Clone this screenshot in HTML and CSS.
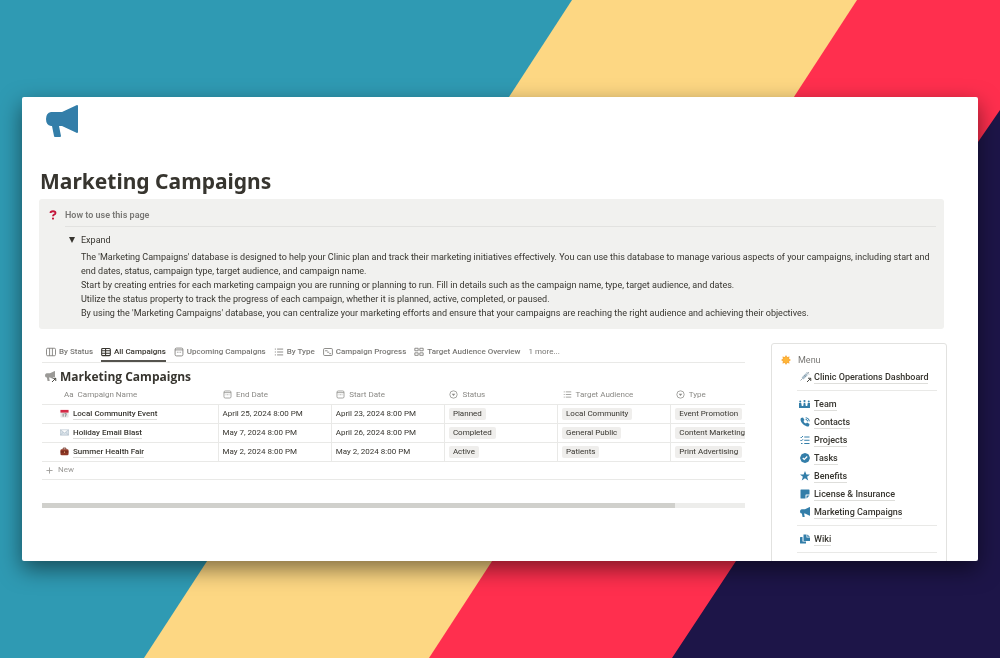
FILE: index.html
```html
<!DOCTYPE html>
<html lang="en">
<head>
<meta charset="utf-8">
<title>Marketing Campaigns</title>
<meta name="viewport" content="width=device-width, initial-scale=1">
<link rel="stylesheet" href="styles.css">
</head>
<body>
<svg class="backdrop" viewBox="0 0 1000 658" preserveAspectRatio="none" aria-hidden="true">
  <rect width="1000" height="658" fill="#2f9ab3"/>
  <path fill="#fdd783" d="M572 0H1000V658H144z"/>
  <path fill="#ff2f4e" d="M857 0H1000V658H429z"/>
  <path fill="#1d1548" d="M1000 110V658H643L672 658 736 561 978 142z"/>
</svg>
<svg class="sprite" aria-hidden="true">
  <symbol id="horn" viewBox="0 0 32 32"><path d="M5 7h11L31 0q1 0 1 1v26q0 1-1 1L16 21h-3l2 10q0 1-1 1H9q-1 0-1-1L6 21H5q-5-1-5-7t5-7z"/></symbol>
  <symbol id="board" viewBox="0 0 12 12"><path class="line" d="M2 1.500h8q1.400 0 1.400 1.400v6.200q0 1.400-1.400 1.400H2Q.6 10.500.6 9.100V2.900Q.6 1.500 2 1.500zM4.300 1.500v9M7.700 1.500v9"/></symbol>
  <symbol id="grid" viewBox="0 0 12 12"><path class="line bold" d="M2 1.700h8q1.200 0 1.200 1.200v6.200q0 1.200-1.200 1.200H2Q.8 10.300.8 9.100V2.900Q.8 1.700 2 1.700zM.8 4.500h10.400M.8 7.400h10.400M5.500 1.700v8.600"/></symbol>
  <symbol id="cal" viewBox="0 0 12 12"><path class="line" d="M3 1.300h6q1.700 0 1.700 1.700v6q0 1.700-1.700 1.700H3Q1.300 10.700 1.300 9V3Q1.300 1.300 3 1.300zM1.300 3.500h9.400M3.500 6.300h1M5.500 6.300h1M7.500 6.300h1"/></symbol>
  <symbol id="list" viewBox="0 0 12 12"><path class="line" d="M1 2.500h1.300M1 6h1.300M1 9.500h1.300M3.700 2.500H11M3.700 6H11M3.700 9.500H11"/></symbol>
  <symbol id="progress" viewBox="0 0 12 12"><path class="line" d="M2 1.800h8q1.300 0 1.300 1.300v5.800q0 1.300-1.300 1.300H2Q.7 10.200.7 8.900V3.100Q.7 1.800 2 1.800zM2.500 4.500h3M5 6.200h2.500M7.500 8h2.200"/></symbol>
  <symbol id="gallery" viewBox="0 0 12 12"><path class="line" d="M1 1.500h4v3H1zM7 1.500h4v3H7zM1 7h4v3H1zM7 7h4v3H7z"/></symbol>
  <symbol id="select" viewBox="0 0 12 12"><circle class="line" cx="6" cy="6" r="4.900"/><path d="M3.600 5h4.800L6 8z"/></symbol>
  <symbol id="arrow" viewBox="0 0 12 12"><path class="line halo" d="M2 10 9 3M4 2.500h5.500V8"/><path class="line heavy" d="M2 10 9 3M4 2.500h5.500V8"/></symbol>
  <symbol id="team" viewBox="0 0 24 20"><circle cx="3.500" cy="5" r="2"/><circle cx="12" cy="4" r="2.200"/><circle cx="20.500" cy="5" r="2"/><path d="M1 8h4.500l1 6h3l1-6.500h3l1 6.500h3l1-6H23v10H1z"/></symbol>
  <symbol id="phone" viewBox="0 0 20 20"><path d="M2 2 6 1l3 5-2 2q1 4 5 5l2-2 5 3-1 4q-2 2-6 0Q3 14 1 6 1 3 2 2z"/><path class="line phone" d="M11 4.500q4 .5 4.500 4.500M11.500 1.200q7 1 7.300 7.300"/></symbol>
  <symbol id="checks" viewBox="0 0 20 20"><path class="line phone" d="m1 4 1.500 1.500L6 2M1 10.500 2.500 12 6 8.500M8.500 4H19M8.500 10.500H19M8.500 17H19M2 17h3"/></symbol>
  <symbol id="done" viewBox="0 0 20 20"><path d="m10 0 3 1 3.700 1.500L18.500 6l1.500 4-1.500 4-1.800 3.500L13 19l-3 1-3-1-3.700-1.500L1.500 14 0 10l1.500-4 1.800-3.500L7 1z"/><path class="tick" d="m5.500 10 3 3 6-6"/></symbol>
  <symbol id="star" viewBox="0 0 20 20"><path d="m10 0 2.800 7H20l-5.800 4.500L16.500 19 10 14.500 3.500 19l2.300-7.500L0 7h7.200z"/></symbol>
  <symbol id="note" viewBox="0 0 20 20"><path d="M2 1h16q1 0 1 1v9h-7q-1 0-1 1v7H2q-1 0-1-1V2q0-1 1-1zM13 13h6l-6 6z"/></symbol>
  <symbol id="pages" viewBox="0 0 20 20"><path d="M1 6h4v9h7v4H1q-1 0-1-1V7zM7 1h6v6h7v7H8q-1 0-1-1zM14.500 1 20 5.500h-5.500z"/></symbol>
</svg>
<main class="window">
  <svg class="page-icon"><use href="#horn"/></svg>
  <h1 class="title">Marketing Campaigns</h1>
  <section class="callout">
    <svg class="question" viewBox="0 0 10 12" aria-hidden="true"><path class="hook" d="M2 3.500Q2 1.500 5 1.500t3 2Q8 5 6.300 5.600 5 6.200 5 7.500"/><circle cx="5" cy="10.300" r="1.300"/></svg>
    <div class="callout-body">
      <h2 class="callout-title">How to use this page</h2>
      <details class="toggle" open>
        <summary>Expand</summary>
        <div class="toggle-text">
          <p>The 'Marketing Campaigns' database is designed to help your Clinic plan and track their marketing initiatives effectively. You can use this database to manage various aspects of your campaigns, including start and end dates, status, campaign type, target audience, and campaign name.</p>
          <p>Start by creating entries for each marketing campaign you are running or planning to run. Fill in details such as the campaign name, type, target audience, and dates.</p>
          <p>Utilize the status property to track the progress of each campaign, whether it is planned, active, completed, or paused.</p>
          <p>By using the 'Marketing Campaigns' database, you can centralize your marketing efforts and ensure that your campaigns are reaching the right audience and achieving their objectives.</p>
        </div>
      </details>
    </div>
  </section>
  <div class="columns">
    <section class="database">
      <nav class="tabs" aria-label="Views">
        <button class="tab"><svg><use href="#board"/></svg>By Status</button>
        <button class="tab active" aria-current="true"><svg><use href="#grid"/></svg>All Campaigns</button>
        <button class="tab"><svg><use href="#cal"/></svg>Upcoming Campaigns</button>
        <button class="tab"><svg><use href="#list"/></svg>By Type</button>
        <button class="tab"><svg><use href="#progress"/></svg>Campaign Progress</button>
        <button class="tab"><svg><use href="#gallery"/></svg>Target Audience Overview</button>
        <button class="tab more">1 more...</button>
      </nav>
      <h2 class="db-title"><span class="linked gray"><svg class="base"><use href="#horn"/></svg><svg class="badge"><use href="#arrow"/></svg></span>Marketing Campaigns</h2>
      <div class="table-scroll">
        <table class="table">
          <colgroup><col class="name-col"><col><col><col><col><col></colgroup>
          <thead><tr>
            <th scope="col"><span class="head"><span class="aa">Aa</span>Campaign Name</span></th>
            <th scope="col"><span class="head"><svg><use href="#cal"/></svg>End Date</span></th>
            <th scope="col"><span class="head"><svg><use href="#cal"/></svg>Start Date</span></th>
            <th scope="col"><span class="head"><svg><use href="#select"/></svg>Status</span></th>
            <th scope="col"><span class="head"><svg><use href="#list"/></svg>Target Audience</span></th>
            <th scope="col"><span class="head"><svg><use href="#select"/></svg>Type</span></th>
          </tr></thead>
          <tbody>
            <tr><td><span class="name"><svg viewBox="0 0 10 10"><rect x=".5" y="1" width="9" height="8.500" rx="1" fill="#e8e5e5"/><path fill="#d42945" d="M.5 1h9v3h-9z"/><path fill="none" stroke="#777" stroke-width=".9" d="M3.500 5v3.500M5 5.200h2L6 8.500"/></svg><a href="#">Local Community Event</a></span></td><td>April 25, 2024 8:00 PM</td><td>April 23, 2024 8:00 PM</td><td><span class="tag">Planned</span></td><td><span class="tag">Local Community</span></td><td><span class="tag">Event Promotion</span></td></tr>
            <tr><td><span class="name"><svg viewBox="0 0 10 10"><path fill="#d9e2e9" stroke="#a6b7c4" stroke-width=".6" d="M.5 2h9v6h-9zl4.500 3.500L9.500 2M.5 8l3.200-3.500M9.500 8 6.300 4.500"/></svg><a href="#">Holiday Email Blast</a></span></td><td>May 7, 2024 8:00 PM</td><td>April 26, 2024 8:00 PM</td><td><span class="tag">Completed</span></td><td><span class="tag">General Public</span></td><td><span class="tag">Content Marketing</span></td></tr>
            <tr><td><span class="name"><svg viewBox="0 0 10 10"><path fill="none" stroke="#6b2a1c" d="M3.500 3V1.200h3V3"/><rect x=".5" y="2.500" width="9" height="6.700" rx="1.500" fill="#8f3826"/><path stroke="#5e2014" stroke-width=".8" d="M.5 5.500h9"/><path fill="#e0a070" d="M4.400 5h1.200v1.500H4.400z"/></svg><a href="#">Summer Health Fair</a></span></td><td>May 2, 2024 8:00 PM</td><td>May 2, 2024 8:00 PM</td><td><span class="tag">Active</span></td><td><span class="tag">Patients</span></td><td><span class="tag">Print Advertising</span></td></tr>
          </tbody>
        </table>
      </div>
      <button class="new-row"><svg viewBox="0 0 8 8"><path class="line" d="M4 .5v7M.5 4h7"/></svg>New</button>
      <div class="scrollbar"><div class="thumb"></div></div>
    </section>
    <aside class="menu">
      <svg class="sun" viewBox="0 0 20 20" aria-hidden="true"><path fill="#f7a93b" d="m10 0 2.400 3.800L17 3l-.8 4.600L20 10l-3.800 2.400L17 17l-4.600-.8L10 20l-2.400-3.800L3 17l.8-4.600L0 10l3.800-2.400L3 3l4.600.8z"/><circle cx="10" cy="10" r="5.500" fill="#ffb638"/></svg>
      <div class="menu-body">
        <h2 class="menu-title">Menu</h2>
        <a class="link" href="#"><span class="linked"><svg class="base" viewBox="0 0 20 20"><path stroke="#a9bdca" stroke-width="5" d="m5 15 9-9"/><path fill="none" stroke="#82939f" stroke-width="1.500" d="m1 19 4-4M13 2l5 5M15 5l3-3M8 8l4 4"/></svg><svg class="badge"><use href="#arrow"/></svg></span><span>Clinic Operations Dashboard</span></a>
        <nav class="group" aria-label="Databases">
          <a class="link" href="#"><svg class="wide"><use href="#team"/></svg><span>Team</span></a>
          <a class="link" href="#"><svg><use href="#phone"/></svg><span>Contacts</span></a>
          <a class="link" href="#"><svg><use href="#checks"/></svg><span>Projects</span></a>
          <a class="link" href="#"><svg><use href="#done"/></svg><span>Tasks</span></a>
          <a class="link" href="#"><svg><use href="#star"/></svg><span>Benefits</span></a>
          <a class="link" href="#"><svg><use href="#note"/></svg><span>License &amp; Insurance</span></a>
          <a class="link" href="#"><svg><use href="#horn"/></svg><span>Marketing Campaigns</span></a>
        </nav>
        <div class="group"><a class="link" href="#"><svg><use href="#pages"/></svg><span>Wiki</span></a></div>
        <div class="group"></div>
      </div>
    </aside>
  </div>
</main>
</body>
</html>
```
FILE: styles.css
```css
* { box-sizing: border-box; }
body {
  margin: 0;
  height: 100vh;
  padding: 97px 22px;
  overflow: hidden;
  font-family: Roboto, "Open Sans", sans-serif;
  font-size: 9px;
  line-height: 14px;
  color: #37352f;
}
h1, h2, p { margin: 0; }
a { color: inherit; text-decoration: none; }
button { border: 0; padding: 0; background: none; font: inherit; color: inherit; }
svg { display: block; flex: none; fill: currentColor; }
.line { fill: none; stroke: currentColor; stroke-width: 1; }
.bold { stroke-width: 1.3; }
.heavy { stroke-width: 1.8; }
.halo { stroke: #fff; stroke-width: 5; }
.phone { stroke-width: 2; }
.tick { fill: none; stroke: #fff; stroke-width: 2.4; }
.sprite { position: absolute; width: 0; height: 0; }
.backdrop { position: fixed; inset: 0; z-index: -1; width: 100%; height: 100%; }

.window {
  height: 100%;
  overflow: hidden;
  padding: 8px 31px 0 17px;
  background: #fff;
  border-radius: 2px;
  box-shadow: 0 8px 22px rgba(0, 0, 0, .5);
}
.page-icon { width: 32px; height: 32px; margin-left: 7px; color: #337ea9; }
.title {
  margin: 29px 1px 3px;
  font-family: "Noto Sans", "Open Sans", sans-serif;
  font-size: 21px;
  line-height: 30px;
  font-weight: 700;
}

.callout {
  display: flex;
  gap: 7px;
  margin-right: 3px;
  padding: 9px 8px 9px 9px;
  background: #f1f1ef;
  border-radius: 3px;
}
.question { width: 10px; height: 10px; margin-top: 2px; fill: #c4153a; }
.hook { fill: none; stroke: #c4153a; stroke-width: 2.2; }
.callout-body { flex: 1; min-width: 0; }
.callout-title {
  padding-bottom: 4px;
  border-bottom: 1px solid #e2e2e0;
  font-size: 9px;
  line-height: 14px;
  font-weight: 600;
  color: #787774;
}
.toggle { padding: 6px 0 0 4px; }
.toggle summary { display: flex; align-items: center; gap: 6px; list-style: none; }
.toggle summary::before {
  content: "";
  border: 3px solid transparent;
  border-top: 6px solid #37352f;
  border-bottom: 0;
}
.toggle-text { padding: 3px 0 0 12px; }

.columns { display: flex; align-items: flex-start; gap: 26px; padding-left: 3px; }
.database { flex: 1; min-width: 0; padding-top: 15px; }
.tabs { display: flex; gap: 8px; padding-left: 4px; border-bottom: 1px solid #e9e9e7; white-space: nowrap; }
.tab { display: flex; align-items: center; gap: 3px; height: 18px; padding-bottom: 2px; font-size: 8px; color: #787774; font-weight: 500; }
.tab svg { width: 10px; height: 10px; }
.tab.active { color: #37352f; box-shadow: inset 0 -2px #55534e; }
.more { font-weight: 400; }
.db-title {
  display: flex;
  align-items: center;
  gap: 3px;
  padding: 5px 3px 0;
  font-family: "Open Sans", "Noto Sans", sans-serif;
  font-size: 12px;
  line-height: 18px;
  font-weight: 700;
}
.linked { position: relative; flex: none; width: 12px; height: 12px; }
.linked .base { width: 10px; height: 10px; }
.linked .badge { position: absolute; right: 0; bottom: 0; width: 6px; height: 6px; color: #37352f; }
.gray { color: #9b9a97; }

.table-scroll { overflow: hidden; }
.table { width: 742px; table-layout: fixed; border-collapse: collapse; font-size: 8px; white-space: nowrap; }
.name-col { width: 176px; }
.table th { height: 18px; padding: 0 5px; font-weight: 400; text-align: left; color: #8a8985; }
.table th:first-child { padding-left: 22px; }
.table td { height: 19px; padding: 0 4px; border: 1px solid #e9e9e7; border-right: 0; }
.table td:first-child { padding-left: 18px; border-left: 0; }
.head, .name { display: flex; align-items: center; gap: 4px; }
.head svg, .name svg { width: 9px; height: 9px; }
.name a { line-height: 11px; border-bottom: 1px solid #dededb; font-weight: 500; }
.tag { display: inline-block; padding: 0 4px; border-radius: 2px; background: #efeeec; line-height: 12px; }
.new-row { display: flex; align-items: center; gap: 5px; width: 100%; height: 18px; padding-left: 4px; border-bottom: 1px solid #e9e9e7; font-size: 8px; color: #9b9a97; }
.new-row svg { width: 7px; height: 7px; }
.scrollbar { height: 5px; margin-top: 23px; background: #ededeb; }
.thumb { width: 90%; height: 100%; background: #d0d0cc; }

.menu {
  display: flex;
  flex: 0 0 176px;
  gap: 6px;
  height: 240px;
  margin-top: 14px;
  padding: 9px;
  border: 1px solid #e2e2e0;
  border-radius: 3px;
}
.sun { width: 10px; height: 10px; margin-top: 2px; }
.menu-body { flex: 1; min-width: 0; }
.menu-title { padding-left: 1px; font-size: 9px; line-height: 15px; font-weight: 400; color: #787774; }
.link { display: flex; align-items: center; gap: 4px; height: 18px; padding-left: 3px; font-weight: 500; white-space: nowrap; }
.link > svg { width: 10px; height: 10px; color: #337ea9; }
.link > .wide { width: 13px; margin: 0 -1px 0 -2px; }
.link > .linked { margin: 0 -2px 0 0; }
.link > span:last-child { line-height: 12px; border-bottom: 1px solid #dededb; }
.group { margin-top: 4px; padding-top: 4px; border-top: 1px solid #e9e9e7; }
```
